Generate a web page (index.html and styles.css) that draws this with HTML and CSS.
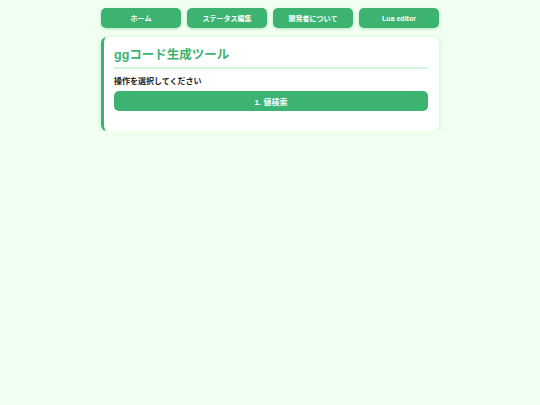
FILE: index.html
```html
<!DOCTYPE html>
<html lang="ja">
<head>
<meta charset="utf-8">
<title>ggコード生成ツール</title>
<link rel="stylesheet" href="styles.css">
</head>
<body>
<div class="wrap">
  <nav class="nav">
    <a class="nav-btn">ホーム</a>
    <a class="nav-btn">ステータス編集</a>
    <a class="nav-btn">開発者について</a>
    <a class="nav-btn">Lua editor</a>
  </nav>
  <section class="card">
    <h1 class="title">ggコード生成ツール</h1>
    <p class="label">操作を選択してください</p>
    <button class="action">1. 値検索</button>
  </section>
</div>
</body>
</html>
```

FILE: styles.css
```css
html, body {
  margin: 0;
  padding: 0;
}
body {
  background: #f0fff0;
  font-family: "Liberation Sans", "Noto Sans CJK JP", sans-serif;
  color: #222;
}
.wrap {
  width: 338px;
  margin: 0 auto;
  padding-top: 8px;
}
.nav {
  display: grid;
  grid-template-columns: repeat(4, 1fr);
  gap: 6px;
}
.nav-btn {
  display: flex;
  align-items: center;
  justify-content: center;
  height: 20px;
  background: #3cb371;
  color: #fff;
  font-size: 7px;
  font-weight: bold;
  border-radius: 5px;
  box-shadow: 0 1px 3px rgba(60, 179, 113, 0.35);
}
.card {
  margin-top: 9px;
  background: #fff;
  border-left: 3px solid #3cb371;
  border-radius: 6px;
  padding: 10px 11px 20px 10px;
  box-shadow: 0 1px 4px rgba(60, 179, 113, 0.25);
}
.title {
  margin: 0;
  font-size: 12.5px;
  line-height: 16px;
  font-weight: bold;
  color: #3cb371;
  padding-bottom: 4px;
  border-bottom: 2px solid #d4f3dc;
}
.label {
  margin: 8px 0 0;
  font-size: 8px;
  line-height: 10px;
  font-weight: bold;
  color: #222;
}
.action {
  display: block;
  width: 100%;
  height: 20px;
  margin-top: 4px;
  border: none;
  border-radius: 5px;
  background: #3cb371;
  color: #fff;
  font-family: inherit;
  font-size: 8px;
  font-weight: bold;
  padding: 0;
}
```
